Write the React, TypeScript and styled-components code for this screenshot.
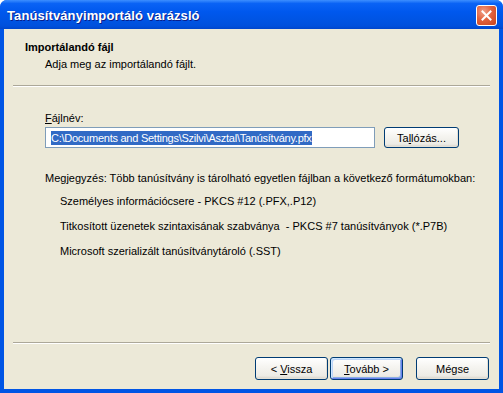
import React from 'react';
import styled, { createGlobalStyle } from 'styled-components';

const GlobalStyle = createGlobalStyle`
  html, body {
    margin: 0;
    padding: 0;
    background: #ffffff;
  }
  body {
    font-family: "Liberation Sans", Arial, sans-serif;
    font-size: 11px;
    color: #000000;
  }
`;

const Window = styled.div`
  width: 503px;
  height: 393px;
  display: flex;
  flex-direction: column;
  box-sizing: border-box;
  background: #0055e5;
  border-radius: 7px 7px 0 0;
  overflow: hidden;
`;

const TitleBar = styled.div`
  height: 29px;
  flex: none;
  display: flex;
  align-items: center;
  justify-content: space-between;
  padding: 0 6px 0 7px;
  box-sizing: border-box;
  background: linear-gradient(
    to bottom,
    #3d8fff 0%,
    #0a63f5 12%,
    #0058ee 40%,
    #0054e3 70%,
    #0050dc 90%,
    #0046cc 100%
  );
`;

const TitleText = styled.span`
  font-family: "Liberation Sans", Arial, sans-serif;
  font-weight: bold;
  font-size: 13px;
  color: #ffffff;
  text-shadow: 1px 1px 0 #0a1e8a;
  letter-spacing: 0.1px;
  margin-top: 1px;
`;

const CloseButton = styled.div`
  width: 21px;
  height: 21px;
  box-sizing: border-box;
  border: 1px solid #ffffff;
  border-radius: 3px;
  background: radial-gradient(circle at 35% 30%, #f0a08a 0%, #e2623e 45%, #c8431c 100%);
  display: flex;
  align-items: center;
  justify-content: center;
  margin-top: 2px;
`;

const Body = styled.div`
  flex: 1;
  margin: 0 4px 4px 4px;
  background: #ece9d8;
  display: flex;
  flex-direction: column;
`;

const Header = styled.div`
  height: 56px;
  box-sizing: border-box;
  padding: 12px 0 0 21px;
  display: flex;
  flex-direction: column;
  gap: 4px;
`;

const HeaderTitle = styled.div`
  font-weight: bold;
  line-height: 13px;
`;

const HeaderSub = styled.div`
  line-height: 13px;
  padding-left: 20px;
`;

const Separator = styled.div`
  margin: 0 9px;
  border-top: 1px solid #aca899;
  border-bottom: 1px solid #ffffff;
  flex: none;
`;

const Content = styled.div`
  flex: 1;
  padding: 25px 0 0 41px;
  display: flex;
  flex-direction: column;
`;

const Label = styled.div`
  line-height: 13px;
`;

const FileRow = styled.div`
  display: flex;
  gap: 9px;
  margin-top: 2px;
`;

const TextField = styled.div`
  width: 330px;
  height: 21px;
  box-sizing: border-box;
  border: 1px solid #7f9db9;
  background: #ffffff;
  display: flex;
  align-items: center;
  padding-left: 5px;
  white-space: nowrap;
  overflow: hidden;
`;

const Selected = styled.span`
  background: #316ac5;
  color: #ffffff;
  line-height: 14px;
  letter-spacing: -0.25px;
`;

const Button = styled.div<{ $default?: boolean }>`
  width: 73px;
  height: 23px;
  box-sizing: border-box;
  border: 1px solid #003c74;
  border-radius: 3px;
  display: flex;
  align-items: center;
  justify-content: center;
  white-space: pre;
  background: linear-gradient(to bottom, #ffffff 0%, #f6f5f1 40%, #ecebe5 85%, #d6d0c5 100%);
  box-shadow: ${p =>
    p.$default
      ? 'inset 1px 1px 0 #cee7ff, inset -1px -1px 0 #6982ee, inset 2px 2px 0 #bcd4f6, inset -2px -2px 0 #89ade4'
      : 'inset -1px -1px 0 #e3e0d6'};
`;

const BrowseButton = styled(Button)`
  width: 75px;
  height: 21px;
`;

const Note = styled.div`
  margin-top: 24px;
  line-height: 13px;
`;

const FormatList = styled.div`
  display: flex;
  flex-direction: column;
  gap: 12px;
  padding: 10px 0 0 15px;
`;

const FormatItem = styled.div`
  line-height: 13px;
`;

const ButtonRow = styled.div`
  display: flex;
  justify-content: flex-end;
  align-items: center;
  padding: 13px 10px 9px 0;
`;

const ButtonPair = styled.div`
  display: flex;
  gap: 2px;
  margin-right: 13px;
`;

const Key = styled.span`
  text-decoration: underline;
`;

const App: React.FC = () => {
  return (
    <>
      <GlobalStyle />
      <Window>
        <TitleBar>
          <TitleText>Tanúsítványimportáló varázsló</TitleText>
          <CloseButton>
            <svg width="11" height="11" viewBox="0 0 11 11">
              <path d="M1.5 1.5 L9.5 9.5 M9.5 1.5 L1.5 9.5" stroke="#ffffff" strokeWidth="2" strokeLinecap="square" />
            </svg>
          </CloseButton>
        </TitleBar>
        <Body>
          <Header>
            <HeaderTitle>Importálandó fájl</HeaderTitle>
            <HeaderSub>Adja meg az importálandó fájlt.</HeaderSub>
          </Header>
          <Separator />
          <Content>
            <Label><Key>F</Key>ájlnév:</Label>
            <FileRow>
              <TextField>
                <Selected>C:\Documents and Settings\Szilvi\Asztal\Tanúsítvány.pfx</Selected>
              </TextField>
              <BrowseButton><span>Ta<Key>l</Key>lózás...</span></BrowseButton>
            </FileRow>
            <Note>Megjegyzés: Több tanúsítvány is tárolható egyetlen fájlban a következő formátumokban:</Note>
            <FormatList>
              <FormatItem>Személyes információcsere - PKCS #12 (.PFX,.P12)</FormatItem>
              <FormatItem>Titkosított üzenetek szintaxisának szabványa&nbsp; - PKCS #7 tanúsítványok (*.P7B)</FormatItem>
              <FormatItem>Microsoft szerializált tanúsítványtároló (.SST)</FormatItem>
            </FormatList>
          </Content>
          <Separator />
          <ButtonRow>
            <ButtonPair>
              <Button><span>&lt; <Key>V</Key>issza</span></Button>
              <Button $default><span><Key>T</Key>ovább &gt;</span></Button>
            </ButtonPair>
            <Button><span>Mégse</span></Button>
          </ButtonRow>
        </Body>
      </Window>
    </>
  );
};

export default App;
